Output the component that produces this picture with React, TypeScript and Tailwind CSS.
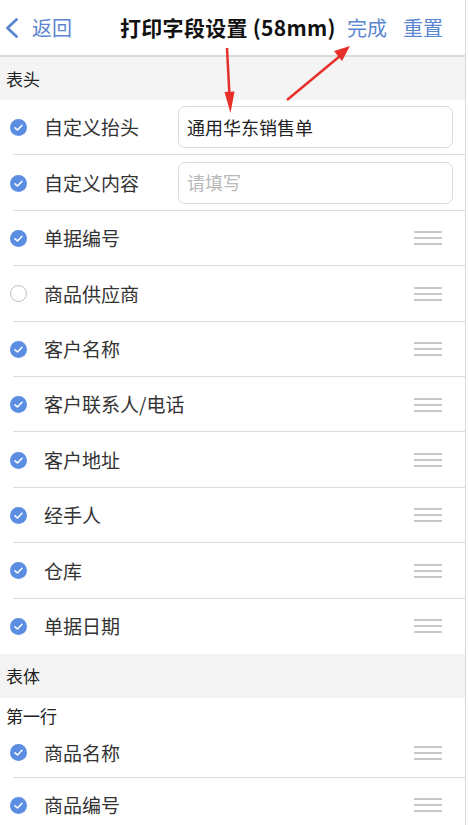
import React from "react";

const font = { fontFamily: '"Noto Sans CJK SC", "Noto Sans", sans-serif' };

function Check({ on }: { on: boolean }) {
  return on ? (
    <svg width="17" height="17" viewBox="0 0 17 17" className="shrink-0">
      <circle cx="8.5" cy="8.5" r="8.5" fill="#5b8de3" />
      <path d="M5 8.8 L7.5 11 L12 6.3" fill="none" stroke="#fff" strokeWidth="1.6" strokeLinecap="round" strokeLinejoin="round" />
    </svg>
  ) : (
    <svg width="17" height="17" viewBox="0 0 17 17" className="shrink-0">
      <circle cx="8.5" cy="8.5" r="8" fill="#fff" stroke="#bdbdbd" strokeWidth="1" />
    </svg>
  );
}

function Handle() {
  return (
    <div className="flex flex-col gap-[4px] w-[28px] mr-[23px]">
      <div className="h-[2px] bg-[#c8c8c8]" />
      <div className="h-[2px] bg-[#c8c8c8]" />
      <div className="h-[2px] bg-[#c8c8c8]" />
    </div>
  );
}

function Row({ label, on = true, last = false, h = "h-[55.4px]" }: { label: string; on?: boolean; last?: boolean; h?: string }) {
  return (
    <div className={`${h} flex items-center pl-[10px] ml-0 relative`}>
      <Check on={on} />
      <span className="ml-[17px] text-[19px] text-[#333] flex-1">{label}</span>
      <Handle />
      {!last && <div className="absolute left-[13px] right-0 bottom-0 h-px bg-[#dcdcdc]" />}
    </div>
  );
}

function InputRow({ label, value, placeholder }: { label: string; value?: string; placeholder?: string }) {
  return (
    <div className="h-[55.4px] flex items-center pl-[10px] relative">
      <Check on />
      <span className="ml-[17px] text-[19px] text-[#333] w-[134px]">{label}</span>
      <div className="w-[275px] h-[42px] border border-[#dcdcdc] rounded-[7px] flex items-center pl-[8px] -mt-[1px]">
        {value ? (
          <span className="text-[18px] text-[#222]">{value}</span>
        ) : (
          <span className="text-[18px] text-[#b8b8b8]">{placeholder}</span>
        )}
      </div>
      <div className="absolute left-[13px] right-0 bottom-0 h-px bg-[#dcdcdc]" />
    </div>
  );
}

export default function App() {
  return (
    <div className="w-[468px] h-[825px] overflow-hidden bg-white relative" style={font}>
      <div className="w-[466px] h-full border-r border-[#d9d9d9]">
        <div className="h-[57px] border-b-2 border-[#dadada] flex items-center">
          <svg width="14" height="20" viewBox="0 0 14 20" className="ml-[5px] shrink-0">
            <path d="M11.5 1.5 L2.5 10 L11.5 18.5" fill="none" stroke="#5b86d0" strokeWidth="2.8" strokeLinecap="round" strokeLinejoin="round" />
          </svg>
          <span className="ml-[13px] text-[20px] text-[#5b86d0]">返回</span>
          <span className="ml-[48px] text-[21px] font-bold text-[#111] whitespace-nowrap tracking-[0.3px]">打印字段设置 (58mm)</span>
          <span className="ml-auto text-[20px] text-[#5b86d0]">完成</span>
          <span className="ml-[16px] mr-[22px] text-[20px] text-[#5b86d0]">重置</span>
        </div>
        <div className="h-[43px] bg-[#f4f4f4] flex items-center pl-[6px] text-[17px] text-[#222]">表头</div>
        <InputRow label="自定义抬头" value="通用华东销售单" />
        <InputRow label="自定义内容" placeholder="请填写" />
        <Row label="单据编号" />
        <Row label="商品供应商" on={false} />
        <Row label="客户名称" />
        <Row label="客户联系人/电话" />
        <Row label="客户地址" />
        <Row label="经手人" />
        <Row label="仓库" />
        <Row label="单据日期" last />
        <div className="h-[44px] bg-[#f4f4f4] flex items-center pl-[6px] text-[17px] text-[#222]">表体</div>
        <div className="h-[30px] pt-[6px] pl-[6px] text-[17px] leading-[24px] text-[#222]">第一行</div>
        <Row label="商品名称" h="h-[50px]" />
        <Row label="商品编号" h="h-[55px]" last />
      </div>
      <svg className="absolute left-0 top-0 pointer-events-none" width="468" height="825" viewBox="0 0 468 825">
        <path d="M227 48 L229.5 96" stroke="#e8302a" strokeWidth="2.5" fill="none" />
        <path d="M224.5 92 L230.5 113 L234.5 91.5 Z" fill="#e8302a" />
        <path d="M287 100 L340 56" stroke="#e8302a" strokeWidth="2.5" fill="none" />
        <path d="M334 51 L350 46 L342 61 Z" fill="#e8302a" />
      </svg>
    </div>
  );
}
